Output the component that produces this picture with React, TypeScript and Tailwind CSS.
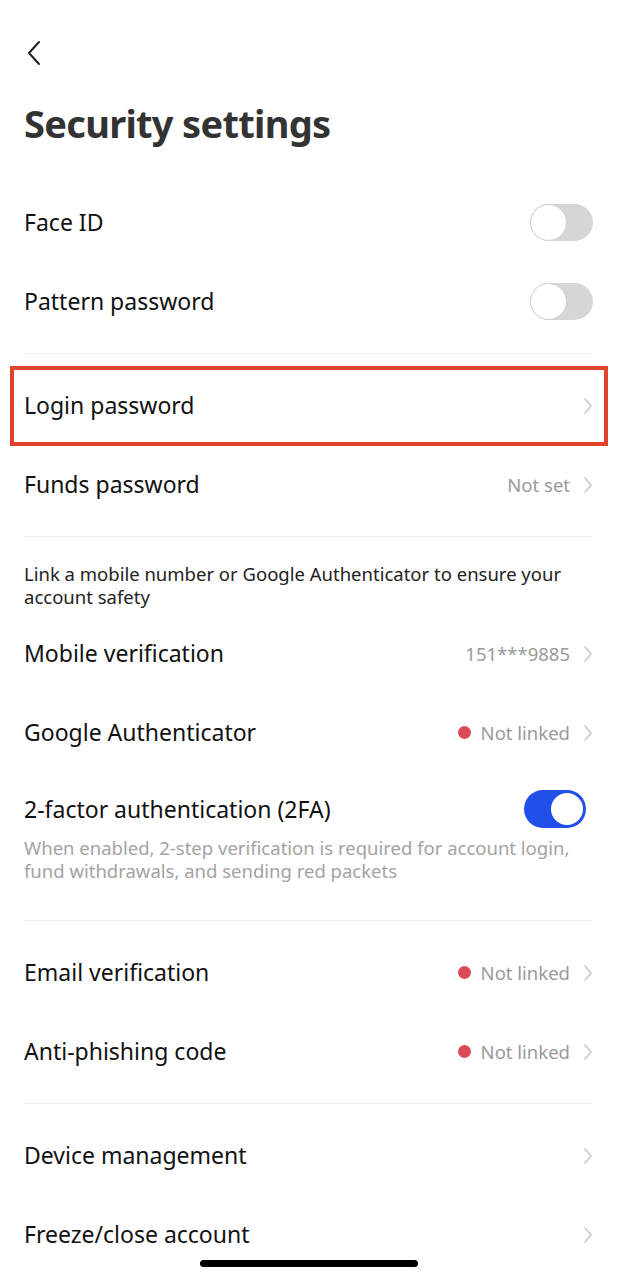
import React from "react";

const font = { fontFamily: '"Noto Sans", "Open Sans", Arial, sans-serif' };

const Chevron = () => (
  <svg width="10" height="18" viewBox="0 0 10 18" fill="none" className="ml-[13px] shrink-0">
    <path d="M2 2l6 7-6 7" stroke="#c9c9c9" strokeWidth="1.6" strokeLinecap="round" strokeLinejoin="round" />
  </svg>
);

const Toggle = ({ on }: { on?: boolean }) =>
  on ? (
    <div className="flex h-[38px] w-[62px] items-center justify-end rounded-full bg-[#1f4fe8] px-[3px] mr-[7px]">
      <div className="h-[32px] w-[32px] rounded-full bg-white" />
    </div>
  ) : (
    <div className="flex h-[37px] w-[63px] items-center rounded-full bg-[#d6d6d6]">
      <div className="h-[37px] w-[37px] rounded-full border border-[#cfcfcf] bg-white" />
    </div>
  );

const Dot = () => <span className="mr-[10px] inline-block h-[13px] w-[13px] rounded-full bg-[#dc4a5a]" />;

const Row = ({ label, value, dot, toggle }: { label: string; value?: string; dot?: boolean; toggle?: boolean }) => (
  <div className="flex h-[79px] items-center justify-between">
    <span className="text-[23px] text-[#111]">{label}</span>
    {toggle !== undefined ? (
      <Toggle />
    ) : (
      <div className="flex items-center">
        {dot && <Dot />}
        {value && <span className="text-[18.5px] text-[#9a9a9a]">{value}</span>}
        <Chevron />
      </div>
    )}
  </div>
);

const Divider = () => <div className="my-3 h-px bg-[#efefef]" />;

export default function App() {
  return (
    <div className="relative min-h-[1280px] bg-white px-6" style={font}>
      <div className="flex h-[84px] items-center">
        <svg width="18" height="26" viewBox="0 0 18 26" fill="none" className="ml-[1px] mt-[22px]">
          <path d="M14 2L4 13l10 11" stroke="#222" strokeWidth="2" strokeLinecap="round" strokeLinejoin="round" />
        </svg>
      </div>
      <h1 className="flex h-[78px] items-center text-[38px] font-bold leading-none tracking-[-0.7px] text-[#333]">
        Security settings
      </h1>
      <div className="h-[21px]" />
      <Row label="Face ID" toggle />
      <Row label="Pattern password" toggle />
      <Divider />
      <div className="relative">
        <Row label="Login password" />
        <div className="absolute -top-[0px] -bottom-[1px] -left-[14px] -right-[15px] border-4 border-[#e2432d]" />
      </div>
      <Row label="Funds password" value="Not set" />
      <Divider />
      <p className="pt-[13px] pb-[6px] text-[18.5px] leading-[23px] text-[#222]">
        Link a mobile number or Google Authenticator to ensure your account safety
      </p>
      <Row label="Mobile verification" value="151***9885" />
      <Row label="Google Authenticator" value="Not linked" dot />
      <div className="pt-[18px] pb-[38px]">
        <div className="flex items-center justify-between">
          <span className="text-[23px] text-[#111]">2-factor authentication (2FA)</span>
          <Toggle on />
        </div>
        <p className="mt-[8px] text-[18.5px] leading-[23px] text-[#a3a3a3]">
          When enabled, 2-step verification is required for account login, fund withdrawals, and sending red packets
        </p>
      </div>
      <div className="h-px bg-[#efefef] mb-3" />
      <Row label="Email verification" value="Not linked" dot />
      <Row label="Anti-phishing code" value="Not linked" dot />
      <Divider />
      <Row label="Device management" />
      <Row label="Freeze/close account" />
      <div className="absolute left-[200px] top-[1260px] h-[7px] w-[218px] rounded-full bg-black" />
    </div>
  );
}
